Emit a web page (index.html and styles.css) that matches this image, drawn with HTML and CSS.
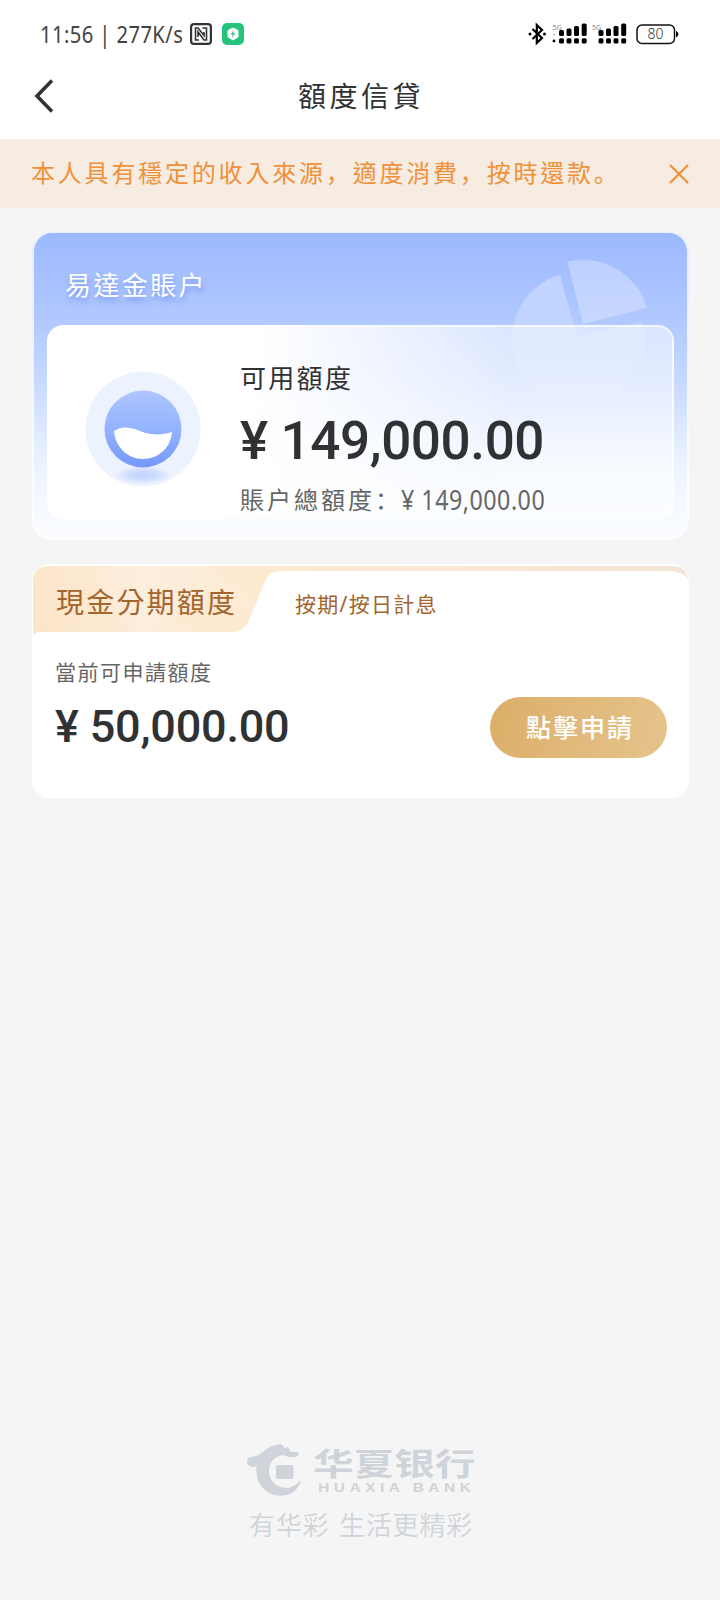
FILE: index.html
```html
<!DOCTYPE html>
<html lang="zh-Hant">
<head>
<meta charset="utf-8">
<title>額度信貸</title>
<link rel="stylesheet" href="styles.css">
</head>
<body>
<div class="status">
  <span class="status-text">11:56 | 277K/s</span>
  <svg class="nfc" width="22" height="22" viewBox="0 0 22 22" fill="none" stroke="#333"><rect x="1.100" y="1.100" width="19.800" height="19.800" rx="3" stroke-width="2.200"/><path d="M9 17H5.500V5H8l6 7.500V9M12.500 5h4v12H14L8 9v5" stroke-width="1.600"/></svg>
  <svg class="shield" width="22" height="22" viewBox="0 0 22 22"><rect width="22" height="22" rx="5" fill="#24c47c"/><path d="M11 5l5 2.500v6.500L11 17l-5-3V7.500z" fill="#fff" stroke="#fff" stroke-linejoin="round"/><path d="M11.500 7L8.800 11.500h1.900L10.300 15l2.900-4.700h-2z" fill="#24c47c"/></svg>
  <svg class="signals" width="154" height="26" viewBox="0 0 154 26">
    <path d="M4.500 8l9.500 9-5.200 5V4L14 9l-9.500 9" fill="none" stroke="#000" stroke-width="2.200"/>
    <circle cx="2" cy="13" r="1.500"/><circle cx="16.500" cy="13" r="1.500"/>
    <text class="net" x="24.500" y="8.500">5G</text><circle cx="26" cy="13.500" r="1" fill="#aaa"/><circle cx="26" cy="20" r="1.400"/>
    <g><rect x="31" y="9" width="5" height="6" rx="1.500"/><rect x="38.500" y="7.500" width="5" height="7.500" rx="1.500"/><rect x="46" y="5" width="5" height="10" rx="1.500"/><rect x="53.700" y="2.500" width="5" height="12.500" rx="1.500"/><rect x="31" y="17.300" width="5" height="5.300" rx="1.500"/><rect x="38.500" y="17.300" width="5" height="5.300" rx="1.500"/><rect x="46" y="17.300" width="5" height="5.300" rx="1.500"/><rect x="53.700" y="17.300" width="5" height="5.300" rx="1.500"/></g>
    <text class="net" x="64" y="8.500">5G</text>
    <g transform="translate(39.500 0)"><rect x="31" y="9" width="5" height="6" rx="1.500"/><rect x="38.500" y="7.500" width="5" height="7.500" rx="1.500"/><rect x="46" y="5" width="5" height="10" rx="1.500"/><rect x="53.700" y="2.500" width="5" height="12.500" rx="1.500"/><rect x="31" y="17.300" width="5" height="5.300" rx="1.500"/><rect x="38.500" y="17.300" width="5" height="5.300" rx="1.500"/><rect x="46" y="17.300" width="5" height="5.300" rx="1.500"/><rect x="53.700" y="17.300" width="5" height="5.300" rx="1.500"/></g>
    <rect x="109" y="4" width="37.500" height="18.500" rx="5" fill="none" stroke="#111" stroke-width="1.500"/><path d="M148.500 10.500q3 2.700 0 5.500z" stroke="#000"/>
    <text class="charge" x="127.500" y="18.300" text-anchor="middle">80</text>
  </svg>
</div>
<header class="nav">
  <svg class="back" width="20" height="34" viewBox="0 0 20 34" fill="none" stroke="#333" stroke-width="3.600"><path d="M18 1.500L3 17 18 32.500"/></svg>
  <h1 class="title">額度信貸</h1>
</header>
<div class="notice">
  <span class="notice-text">本人具有穩定的收入來源<span class="punct" lang="zh-Hans">，</span>適度消費<span class="punct" lang="zh-Hans">，</span>按時還款<span class="punct" lang="zh-Hans">。</span></span>
  <svg width="20" height="20" viewBox="0 0 20 20" fill="none" stroke="#f0913a" stroke-width="2.200"><path d="M1 1l18 18M19 1L1 19"/></svg>
</div>
<main>
  <section class="account">
    <svg class="pie" width="140" height="140" viewBox="0 0 140 140"><defs><linearGradient id="pf" x1="0" y1="0" x2="0" y2="1"><stop stop-color="#fff" stop-opacity=".32"/><stop offset="1" stop-color="#fff" stop-opacity="0"/></linearGradient></defs><path d="M49 17A66 66 0 1 0 131 64L66 79z" fill="url(#pf)"/><path d="M56.500 3.500A67 67 0 0 1 136 50L72 66z" fill="#fff" fill-opacity=".28"/></svg>
    <h2 class="account-name">易達金賬户</h2>
    <div class="panel">
      <svg class="ball" width="116" height="116" viewBox="0 0 116 116"><defs><linearGradient id="bf" x1="0" y1="0" x2="0" y2="1"><stop stop-color="#aec6ff"/><stop offset=".55" stop-color="#91b0ff"/><stop offset="1" stop-color="#7597f9"/></linearGradient><radialGradient id="sf"><stop stop-color="#c3d4ff"/><stop offset=".5" stop-color="#cddbff"/><stop offset="1" stop-color="#cddbff" stop-opacity="0"/></radialGradient></defs><circle cx="58" cy="58" r="57.500" fill="#edf2ff"/><ellipse cx="58" cy="104" rx="28" ry="9" fill="url(#sf)"/><circle cx="58" cy="58" r="38.500" fill="url(#bf)"/><path d="M29 60C43 51 55 62 66 63c8 1 14 0 21-2C86 76 74 88 58 88S30 75 29 60z" fill="#fff"/></svg>
      <div class="amounts">
        <div class="label">可用額度</div>
        <div class="big">¥ 149,000.00</div>
        <div class="total"><span>賬户總額度<span class="punct" lang="zh-Hans">：</span></span><span class="total-num">¥ 149,000.00</span></div>
      </div>
    </div>
  </section>
  <section class="cash">
    <svg class="tab" width="658" height="74" viewBox="0 0 658 74"><defs><linearGradient id="tf"><stop stop-color="#fce6cb"/><stop offset=".17" stop-color="#fceedd"/><stop offset=".36" stop-color="#fdead2"/><stop offset="1" stop-color="#f3e5d6"/></linearGradient></defs><path d="M1 72V18Q1 2 17 2H640Q654 2 656 15Q650 7 636 7H248Q237 7 233 17L218 54Q213 68 200 68H8Q3 68 1 72z" fill="url(#tf)"/><path d="M1 67L56 5 100 67zM175 2l49 35 12-27 10-8zM114 67l70-38 34 25-18 14z" fill="#ffe4bd" opacity=".2"/></svg>
    <div class="cash-head"><h2 class="cash-title">現金分期額度</h2><span class="cash-sub">按期/按日計息</span></div>
    <div class="cash-body">
      <div><div class="cash-label">當前可申請額度</div><div class="mid">¥ 50,000.00</div></div>
      <button class="apply">點擊申請</button>
    </div>
  </section>
</main>
<footer class="footer">
  <div class="brand">
    <svg width="56" height="54" viewBox="0 0 56 54" fill="#ced4d9"><path d="M2 14Q-1 20 4 22Q7 24 10.500 22Q9 38 19 46Q28 54 41 51Q52 48 55 36Q48 44 40 44Q29 43 25 35Q21 27 25 19Q29 12 37 11Q44 14 49 13Q54 12 52 8L45 8L42 3L39 4L35 0Q24 1 17 8Q12 12 6 13z"/><rect x="30" y="21" width="17.500" height="14" rx="2"/></svg>
    <div class="brand-text"><div class="brand-cn">华夏银行</div><div class="brand-en">HUAXIA BANK</div></div>
  </div>
  <div class="slogan">有华彩 <span>生活更精彩</span></div>
</footer>
</body>
</html>
```
FILE: styles.css
```css
* { box-sizing: border-box; }
body { margin: 0; width: 720px; height: 1600px; display: flex; flex-direction: column; background: #f5f5f5; color: #303133; font-family: "Noto Sans", "Noto Sans CJK TC", sans-serif; white-space: nowrap; overflow: hidden; }
h1, h2 { margin: 0; font-weight: 400; }
svg { display: block; flex: none; }
.punct { font-family: "Noto Sans CJK SC", sans-serif; line-height: 1; }
.status { height: 62px; padding: 6px 0 0 40px; display: flex; align-items: center; background: #fff; }
.status-text { width: 150px; font-size: 24px; line-height: 30px; letter-spacing: .5px; color: #444; transform: scaleX(.84); transform-origin: left; }
.shield { margin-left: 10px; }
.signals { margin-left: 284px; }
.net { font-size: 7px; fill: #888; }
.charge { font-size: 14px; font-weight: 300; fill: #333; }
.nav { height: 77px; padding-left: 34px; display: flex; align-items: center; background: #fff; }
.back { margin-bottom: 9px; }
.title { width: 652px; margin: 0 0 9px -19px; text-align: center; font-size: 28px; letter-spacing: 3.500px; line-height: 40px; }
.notice { height: 69px; padding: 0 31px; display: flex; align-items: center; justify-content: space-between; background: #f6ece1; color: #f0913a; }
.notice-text { font-size: 24px; letter-spacing: 2.8px; line-height: 36px; padding-bottom: 2px; }
main { padding: 24px 31px 0 32px; }
.account { position: relative; height: 308px; padding: 33px 13px 0; border: 2px solid rgba(255,255,255,.75); border-top-width: 1px; border-radius: 20px; background: linear-gradient(#9cb9ff 0, #b1c8ff 28%, #c7d9ff 48%, #edf4ff 76%, #fcfdff 100%) border-box; }
.pie { position: absolute; left: 477px; top: 25px; }
.account-name { position: relative; height: 59px; padding-left: 18px; font-size: 26px; letter-spacing: 2.400px; line-height: 38px; color: #fff; text-shadow: 1px 4px 5px rgba(72,112,220,.5); }
.panel { position: relative; height: 194px; padding: 0 0 0 36px; display: flex; gap: 39px; border-radius: 16px; border: 2px solid rgba(255,255,255,.7); border-bottom-color: transparent; background: linear-gradient(100deg, #fff 32%, rgba(255,255,255,.5) 72%, rgba(255,255,255,.5)) border-box; }
.ball { margin-top: 44px; }
.amounts { display: flex; flex-direction: column; }
.label { margin-top: 31px; font-size: 26px; letter-spacing: 2.300px; line-height: 40px; }
.big { font-family: Roboto, sans-serif; font-weight: 500; font-size: 53px; letter-spacing: -.4px; line-height: 62px; margin-top: 12px; }
.total { display: flex; margin-top: 10px; font-size: 24px; letter-spacing: 3px; line-height: 36px; color: #666; }
.total > span:first-child { width: 161px; }
.total-num { font-size: 27px; letter-spacing: .6px; transform: scaleX(.86); transform-origin: left; }
.cash { position: relative; height: 234px; margin-top: 24px; background: #fff; border-radius: 18px; }
.tab { position: absolute; left: 0; top: 0; }
.cash-head { position: relative; height: 74px; padding: 0 24px; display: flex; align-items: center; color: #a3642d; }
.cash-title { width: 239px; font-size: 28px; letter-spacing: 2.200px; }
.cash-sub { font-size: 21px; letter-spacing: 1.300px; padding-top: 4px; }
.cash-body { display: flex; justify-content: space-between; padding: 0 22px 0 23px; }
.cash-label { margin-top: 17px; font-size: 21px; letter-spacing: 1.500px; line-height: 34px; color: #666; }
.mid { margin-top: 11px; font-family: Roboto, sans-serif; font-weight: 500; font-size: 45px; letter-spacing: -.2px; line-height: 54px; }
.apply { width: 177px; height: 61px; margin-top: 59px; padding: 0 0 4px 3px; border: 0; border-radius: 31px; background: linear-gradient(105deg, #dcae68, #e5c48d); color: #fff; font: 500 25px "Noto Sans CJK TC", sans-serif; letter-spacing: 2px; }
.footer { margin-top: auto; height: 156px; padding-left: 246px; color: #ced4d9; }
.brand { display: flex; gap: 11px; }
.brand-cn { height: 35px; font: 700 31px/35px "Noto Sans CJK SC", sans-serif; transform: scaleX(1.310); transform-origin: left; }
.brand-en { margin: 1px 0 0 5px; font: 700 12px/16px "Liberation Sans", sans-serif; letter-spacing: 3.500px; transform: scaleX(1.290); transform-origin: left; }
.brand-text { width: 165px; }
.slogan { margin-top: 8px; padding-left: 3px; font: 350 26px/36px "Noto Sans CJK SC", sans-serif; letter-spacing: .8px; }
.slogan span { margin-left: 3px; }
```
